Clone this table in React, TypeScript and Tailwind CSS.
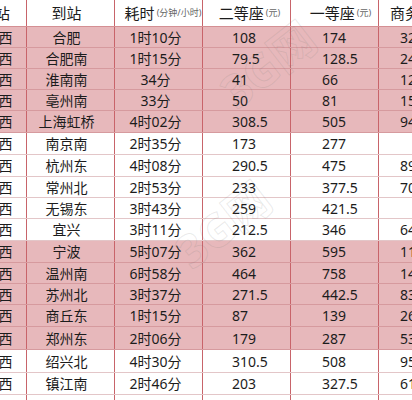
const rows = [
  { to: "合肥", time: "1时10分", second: "108", first: "174", biz: "325", pink: true, h: "h-[21px]" },
  { to: "合肥南", time: "1时15分", second: "79.5", first: "128.5", biz: "241", pink: true, h: "h-[21px]" },
  { to: "淮南南", time: "34分", second: "41", first: "66", biz: "123", pink: true, h: "h-[21px]" },
  { to: "亳州南", time: "33分", second: "50", first: "81", biz: "150", pink: true, h: "h-[21px]" },
  { to: "上海虹桥", time: "4时02分", second: "308.5", first: "505", biz: "947", pink: true, h: "h-[22px]" },
  { to: "南京南", time: "2时35分", second: "173", first: "277", biz: "", pink: false, h: "h-[22px]" },
  { to: "杭州东", time: "4时08分", second: "290.5", first: "475", biz: "891", pink: false, h: "h-[22px]" },
  { to: "常州北", time: "2时53分", second: "233", first: "377.5", biz: "708", pink: false, h: "h-[21px]" },
  { to: "无锡东", time: "3时43分", second: "259", first: "421.5", biz: "", pink: false, h: "h-[21px]" },
  { to: "宜兴", time: "3时11分", second: "212.5", first: "346", biz: "649", pink: false, h: "h-[22px]" },
  { to: "宁波", time: "5时07分", second: "362", first: "595", biz: "1116", pink: true, h: "h-[22px]" },
  { to: "温州南", time: "6时58分", second: "464", first: "758", biz: "1421", pink: true, h: "h-[21px]" },
  { to: "苏州北", time: "3时37分", second: "271.5", first: "442.5", biz: "830", pink: true, h: "h-[21px]" },
  { to: "商丘东", time: "1时15分", second: "87", first: "139", biz: "261", pink: true, h: "h-[22px]" },
  { to: "郑州东", time: "2时06分", second: "179", first: "287", biz: "538", pink: true, h: "h-[23px]" },
  { to: "绍兴北", time: "4时30分", second: "310.5", first: "508", biz: "953", pink: false, h: "h-[23px]" },
  { to: "镇江南", time: "2时46分", second: "203", first: "327.5", biz: "614", pink: false, h: "h-[22px]" },
  { to: "", time: "", second: "", first: "", biz: "", pink: false, h: "h-[22px]" },
];

const cell = "shrink-0 border-r border-[#c8646a] flex items-center";

const Unit = ({ children }: { children: React.ReactNode }) => (
  <span className="text-[9px] text-[#666] ml-[2px]">{children}</span>
);

export default function App() {
  return (
    <div
      className="relative w-[412px] h-[400px] overflow-hidden bg-white text-[#1c1c1c]"
      style={{ fontFamily: "'Noto Sans', 'Noto Sans CJK SC', sans-serif" }}
    >
      <div className="ml-[-43px] w-[580px]">
        {/* Header */}
        <div className="flex h-[27px] bg-white border-b border-[#d48f93] text-[15px]">
          <div className={`${cell} w-[70px] justify-center pr-[8px]`}>始发站</div>
          <div className={`${cell} w-[88px] justify-center pr-[8px]`}>到站</div>
          <div className={`${cell} w-[88px] justify-center pl-[9px] whitespace-nowrap`}>
            耗时<Unit>(分钟/小时)</Unit>
          </div>
          <div className={`${cell} w-[88px] justify-center pl-[6px] whitespace-nowrap`}>
            二等座<Unit>(元)</Unit>
          </div>
          <div className={`${cell} w-[88px] justify-center pl-[12px] whitespace-nowrap`}>
            一等座<Unit>(元)</Unit>
          </div>
          <div className={`${cell} w-[150px] pl-[11px] whitespace-nowrap`}>
            商务座<Unit>(元)</Unit>
          </div>
        </div>

        {/* Rows */}
        {rows.map((r, i) => (
          <div
            key={i}
            className={`flex text-[14px] ${r.h} ${
              r.pink ? "bg-[#e7b8bb] border-b border-[#d69a9e]" : "bg-white border-b border-[#e3c6c8]"
            }`}
          >
            <div className={`${cell} w-[70px] justify-center`}>{r.to ? "阜阳西" : ""}</div>
            <div className={`${cell} w-[88px] justify-center pr-[8px]`}>{r.to}</div>
            <div className={`${cell} w-[88px] justify-center pr-[6px]`}>{r.time}</div>
            <div className={`${cell} w-[88px] pl-[29px]`}>{r.second}</div>
            <div className={`${cell} w-[88px] pl-[31px]`}>{r.first}</div>
            <div className={`${cell} w-[150px] pl-[21px]`}>{r.biz}</div>
          </div>
        ))}
      </div>

      {/* Watermarks */}
      <div className="pointer-events-none absolute left-[215px] top-[30px] -rotate-[38deg] text-[46px] font-bold text-transparent [-webkit-text-stroke:1px_rgba(120,120,120,0.16)] whitespace-nowrap">
        3G网
      </div>
      <div className="pointer-events-none absolute left-[170px] top-[190px] -rotate-[38deg] text-[46px] font-bold text-transparent [-webkit-text-stroke:1px_rgba(120,120,120,0.16)] whitespace-nowrap">
        3G网
      </div>
    </div>
  );
}
